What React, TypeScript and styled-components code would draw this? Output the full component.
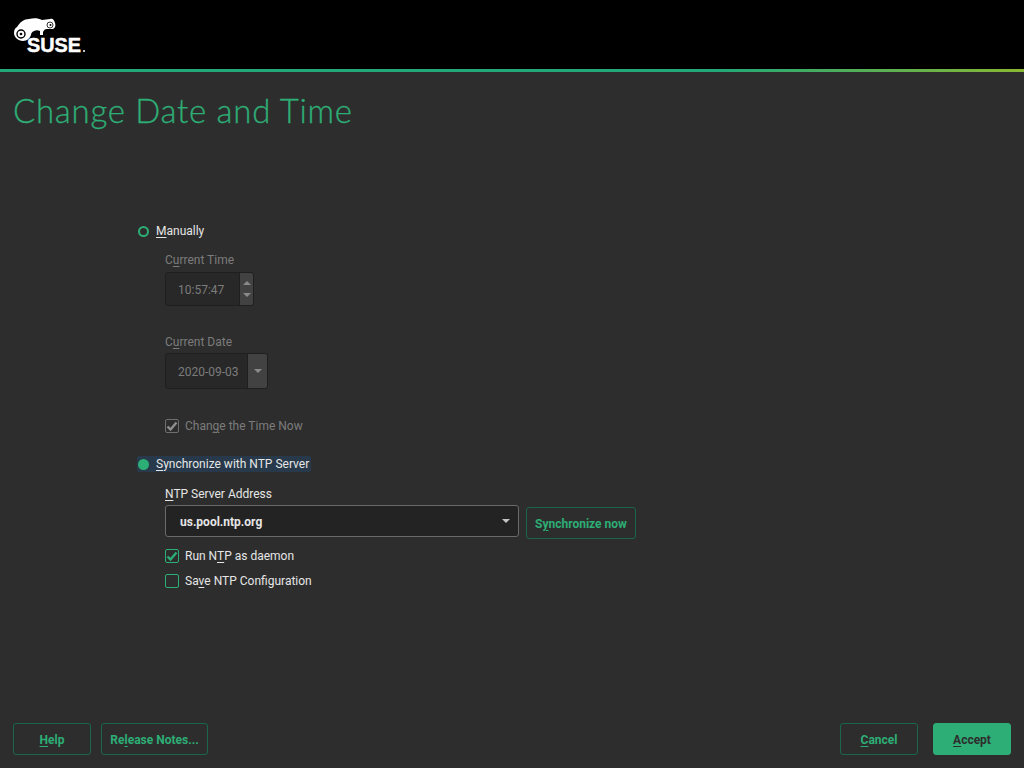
import React from "react";
import styled, { createGlobalStyle } from "styled-components";

const GREEN = "#2dae76";

function Logo() {
  return (
    <svg width="74" height="46" viewBox="0 0 74 46">
      <path
        fill="#fff"
        d="M1 24c0-3 1-5 3-6 3-5 7-8 12-8 5-1 9-1 13 1 3 0 5-1 8-1 3-1 4 1 5 4 1 3 0 5-2 6l-6 0c-2 0-3 1-4 3l0 3-3 0 0-4c-2-1-4-1-6 0-2 1-3 2-3 4-1 3-4 6-8 6-5 0-9-4-9-8z"
      />
      <circle cx="8" cy="25" r="4" fill="none" stroke="#000" strokeWidth="1.400" />
      <circle cx="8" cy="25" r="1.300" fill="#000" />
      <circle cx="37" cy="16" r="3" fill="none" stroke="#000" strokeWidth="0.800" />
      <circle cx="37.500" cy="16" r="1" fill="#000" />
      <text x="14" y="43" fill="#fff" stroke="#fff" strokeWidth="0.500" fontFamily="'Liberation Sans', sans-serif" fontWeight="700" fontSize="21" textLength="54" lengthAdjust="spacingAndGlyphs">
        SUSE
      </text>
      <circle cx="71" cy="42" r="1" fill="#fff" />
    </svg>
  );
}

function Check() {
  return (
    <svg width="12" height="12" viewBox="0 0 12 12">
      <path d="M1.500 6.500 4.500 9.500 10.500 2.500" fill="none" stroke="currentColor" strokeWidth="2.400" />
    </svg>
  );
}

export default function App() {
  return (
    <Page>
      <GlobalStyle />
      <Header>
        <Logo />
      </Header>
      <Title>Change Date and Time</Title>
      <Form>
        <RadioRow>
          <Radio />
          <span>
            <u>M</u>anually
          </span>
        </RadioRow>
        <Indented>
          <FieldLabel $disabled $top={14}>
            C<u>u</u>rrent Time
          </FieldLabel>
          <SpinBox>
            <FieldValue>10:57:47</FieldValue>
            <SpinButtons>
              <ArrowUp />
              <ArrowDown />
            </SpinButtons>
          </SpinBox>
          <FieldLabel $disabled $top={29}>
            C<u>u</u>rrent Date
          </FieldLabel>
          <DateBox>
            <FieldValue>2020-09-03</FieldValue>
            <DateButton>
              <ArrowDown />
            </DateButton>
          </DateBox>
          <CheckRow $disabled $top={30}>
            <CheckBox $checked $disabled>
              <Check />
            </CheckBox>
            <span>
              Chan<u>g</u>e the Time Now
            </span>
          </CheckRow>
        </Indented>
        <SelectedRadioRow>
          <Radio $on />
          <span>
            <u>S</u>ynchronize with NTP Server
          </span>
        </SelectedRadioRow>
        <Indented>
          <FieldLabel $top={15}>
            <u>N</u>TP Server Address
          </FieldLabel>
          <ServerRow>
            <ServerCombo>
              <ServerValue>us.pool.ntp.org</ServerValue>
              <ArrowDown $light />
            </ServerCombo>
            <SyncButton>
              S<u>y</u>nchronize now
            </SyncButton>
          </ServerRow>
          <CheckRow $top={10}>
            <CheckBox $checked>
              <Check />
            </CheckBox>
            <span>
              Run N<u>T</u>P as daemon
            </span>
          </CheckRow>
          <CheckRow $top={11}>
            <CheckBox />
            <span>
              Sa<u>v</u>e NTP Configuration
            </span>
          </CheckRow>
        </Indented>
      </Form>
      <Footer>
        <Button $width={78}>
          <u>H</u>elp
        </Button>
        <Button $width={107}>
          Re<u>l</u>ease Notes...
        </Button>
        <FooterGap />
        <Button $width={78}>
          <u>C</u>ancel
        </Button>
        <PrimaryButton $width={78}>
          <u>A</u>ccept
        </PrimaryButton>
      </Footer>
    </Page>
  );
}

const GlobalStyle = createGlobalStyle`
  html, body {
    margin: 0;
    background: #2d2d2d;
  }
  u {
    text-underline-offset: 2px;
  }
`;

const Page = styled.div`
  display: flex;
  flex-direction: column;
  width: 1024px;
  height: 768px;
  overflow: hidden;
  background: #2d2d2d;
  color: #e6e6e6;
  font: 12px Roboto, sans-serif;
`;

const Header = styled.div`
  flex: none;
  box-sizing: border-box;
  height: 72px;
  padding: 9px 0 0 13px;
  background: #000;
  border-bottom: 3px solid;
  border-image: linear-gradient(90deg, #23a878 0%, #23a878 70%, #8ab833 100%) 1;
`;

const Title = styled.h1`
  margin: 17px 0 0 13px;
  color: ${GREEN};
  font: 300 33px/42px Lato, sans-serif;
  letter-spacing: 0.7px;
  -webkit-text-stroke: 0.3px ${GREEN};
`;

const Form = styled.div`
  display: flex;
  flex-direction: column;
  align-items: flex-start;
  margin: 92px 0 0 137px;
`;

const RadioRow = styled.div`
  display: flex;
  align-items: center;
  gap: 7px;
  height: 16px;
  padding: 0 2px 0 1px;
`;

const SelectedRadioRow = styled(RadioRow)`
  margin-top: 23px;
  background: #27394a;
  border-radius: 2px;
`;

const Radio = styled.span<{ $on?: boolean }>`
  box-sizing: border-box;
  width: 11px;
  height: 11px;
  border: 2px solid ${GREEN};
  border-radius: 50%;
  background: ${(p) => (p.$on ? GREEN : "transparent")};
`;

const Indented = styled.div`
  display: flex;
  flex-direction: column;
  align-items: flex-start;
  margin-left: 28px;
`;

const FieldLabel = styled.div<{ $disabled?: boolean; $top: number }>`
  margin-top: ${(p) => p.$top}px;
  height: 14px;
  line-height: 14px;
  color: ${(p) => (p.$disabled ? "#7c7c7c" : "#e6e6e6")};
`;

const DisabledBox = styled.div`
  display: flex;
  box-sizing: border-box;
  margin-top: 5px;
  background: #282828;
  border: 1px solid #1f1f1f;
  border-radius: 3px;
  color: #7c7c7c;
`;

const SpinBox = styled(DisabledBox)`
  width: 89px;
  height: 34px;
  line-height: 34px;
`;

const DateBox = styled(DisabledBox)`
  width: 103px;
  height: 36px;
  margin-top: 4px;
  line-height: 36px;
`;

const FieldValue = styled.div`
  flex: 1;
  padding-left: 12px;
`;

const SpinButtons = styled.div`
  display: flex;
  flex-direction: column;
  align-items: center;
  justify-content: space-around;
  width: 13px;
  background: #424242;
  border-left: 1px solid #1f1f1f;
  border-radius: 0 2px 2px 0;
  padding: 4px 0;
`;

const DateButton = styled.div`
  display: flex;
  align-items: center;
  justify-content: center;
  width: 19px;
  background: #424242;
  border-left: 1px solid #1f1f1f;
  border-radius: 0 2px 2px 0;
`;

const ArrowUp = styled.span`
  width: 0;
  height: 0;
  border: 4px solid transparent;
  border-top: 0;
  border-bottom: 4px solid #8a8a8a;
`;

const ArrowDown = styled.span<{ $light?: boolean }>`
  width: 0;
  height: 0;
  border: 4px solid transparent;
  border-bottom: 0;
  border-top: 4px solid ${(p) => (p.$light ? "#c4c4c4" : "#8a8a8a")};
`;

const CheckRow = styled.div<{ $disabled?: boolean; $top: number }>`
  display: flex;
  align-items: center;
  gap: 6px;
  height: 14px;
  margin-top: ${(p) => p.$top}px;
  color: ${(p) => (p.$disabled ? "#7c7c7c" : "#e6e6e6")};
`;

const CheckBox = styled.span<{ $checked?: boolean; $disabled?: boolean }>`
  display: flex;
  align-items: center;
  justify-content: center;
  box-sizing: border-box;
  width: 14px;
  height: 14px;
  border: 1px solid ${(p) => (p.$disabled ? "#6e6e6e" : GREEN)};
  border-radius: 2px;
  color: ${(p) => (p.$disabled ? "#8f8f8f" : GREEN)};
`;

const ServerRow = styled.div`
  display: flex;
  align-items: flex-start;
  gap: 7px;
  margin-top: 4px;
`;

const ServerCombo = styled.div`
  display: flex;
  align-items: center;
  justify-content: space-between;
  box-sizing: border-box;
  width: 354px;
  height: 32px;
  padding: 0 8px 0 14px;
  background: #232323;
  border: 1px solid #6a6a6a;
  border-radius: 3px;
`;

const ServerValue = styled.span`
  padding-top: 1px;
  font-weight: 700;
`;

const Button = styled.div<{ $width: number }>`
  box-sizing: border-box;
  width: ${(p) => p.$width}px;
  height: 32px;
  border: 1px solid #19664b;
  border-radius: 3px;
  color: ${GREEN};
  font-weight: 700;
  line-height: 32px;
  text-align: center;
`;

const SyncButton = styled(Button).attrs({ $width: 110 })`
  margin-top: 2px;
`;

const PrimaryButton = styled(Button)`
  margin-left: 5px;
  background: ${GREEN};
  border-color: ${GREEN};
  color: #2d2d2d;
`;

const Footer = styled.div`
  display: flex;
  gap: 10px;
  margin-top: auto;
  padding: 0 13px 13px;
`;

const FooterGap = styled.div`
  flex: 1;
`;
